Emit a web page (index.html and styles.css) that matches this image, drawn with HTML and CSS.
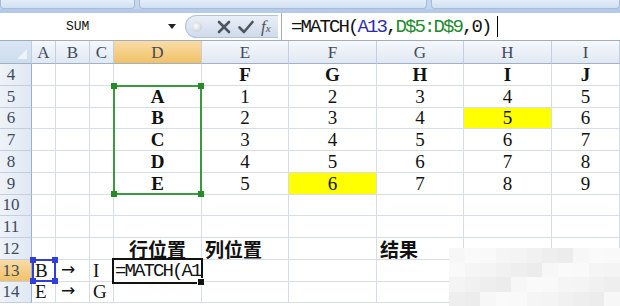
FILE: index.html
```html
<!DOCTYPE html>
<html lang="zh">
<head>
  <meta charset="UTF-8" />
  <title>MATCH</title>
  <link rel="stylesheet" href="styles.css">
</head>
<body>

  <div class="ribbon">
    <div class="tab t1"></div>
    <div class="tab t2"></div>
    <div class="tab t3"></div>
  </div>

  <div class="bar">
    <div class="namebox">
      <span class="name">SUM</span>
      <span class="drop"></span>
    </div>
    <div class="btns">
      <span class="dot"></span>
      <svg class="ico" width="14" height="14" viewBox="0 0 14 14"><path d="M2 2 L12 12 M12 2 L2 12" stroke="#50565e" stroke-width="2.6" stroke-linecap="round"/></svg>
      <svg class="ico" width="16" height="14" viewBox="0 0 16 14"><path d="M1.5 7.5 L6 12 L14.5 2" fill="none" stroke="#50565e" stroke-width="2.6" stroke-linecap="round" stroke-linejoin="round"/></svg>
      <span class="fx">f<small>x</small></span>
    </div>
    <div class="formula">=MATCH(<span class="ref-a">A13</span>,<span class="ref-d">D$5:D$9</span>,0)<span class="caret"></span></div>
  </div>

  <div class="sheet" id="sheet">
    <div class="rng"><i class="hd tl"></i><i class="hd tr"></i><i class="hd bl"></i><i class="hd br"></i></div>
    <div class="pick"><i class="hd tl"></i><i class="hd tr"></i><i class="hd bl"></i><i class="hd br"></i></div>
    <div class="active">=MATCH(A1<i class="fill"></i></div>
  </div>

  <div class="mosaic" id="mosaic"></div>

  <script>
    const cols = ['A', 'B', 'C', 'D', 'E', 'F', 'G', 'H', 'I'];
    const sheet = document.getElementById('sheet');

    const data = {
      E4: 'F', F4: 'G', G4: 'H', H4: 'I', I4: 'J',
      D5: 'A', D6: 'B', D7: 'C', D8: 'D', D9: 'E',
      D12: '行位置', E12: '列位置', G12: '结果',
      A13: 'B', B13: '→', C13: 'I',
      A14: 'E', B14: '→', C14: 'G'
    };
    // numbers: E5 = 1 ... I9 = 9
    for (let r = 5; r <= 9; r++) {
      for (let i = 4; i < 9; i++) {
        data[cols[i] + r] = String(r - 4 + i - 4);
      }
    }
    const yellow = ['F9', 'H6'];
    const left = ['E12', 'G12', 'A13', 'B13', 'C13', 'A14', 'B14', 'C14'];

    function cell(row, col, cls, text) {
      const d = document.createElement('div');
      d.className = 'c ' + cls;
      d.style.gridArea = row + ' / ' + col;
      d.textContent = text;
      sheet.appendChild(d);
      return d;
    }

    cell(1, 1, 'h corner', '');
    cols.forEach((L, i) => cell(1, i + 2, 'h' + (L === 'D' ? ' on' : ''), L));

    for (let r = 4; r <= 14; r++) {
      const gr = r - 2;
      cell(gr, 1, 'rh' + (r === 13 ? ' on' : ''), r);
      cols.forEach((L, i) => {
        const key = L + r;
        let cls = '';
        if (r === 4 || (L === 'D' && r <= 9)) cls += ' b';
        if (r === 12) cls += ' cjk';
        if (left.includes(key)) cls += ' l';
        if (L === 'B' && (r === 13 || r === 14)) cls += ' arrow';
        if (yellow.includes(key)) cls += ' yl';
        cell(gr, i + 2, cls, data[key] || '');
      });
    }

    // blurred watermark tiles
    const shades = ['#f7f7f7', '#f1f1f1', '#f9f9f9', '#ececec', '#f4f4f4', '#fafafa', '#eeeeee', '#f5f5f5'];
    const mosaic = document.getElementById('mosaic');
    for (let k = 0; k < 44; k++) {
      const t = document.createElement('span');
      t.style.background = shades[(k * 5 + Math.floor(k / 11) * 3) % shades.length];
      mosaic.appendChild(t);
    }
  </script>

</body>
</html>
```

FILE: styles.css
```css
body {
  margin: 0;
  width: 620px;
  height: 306px;
  overflow: hidden;
  position: relative;
  background: #fff;
  font-family: 'Liberation Mono', 'DejaVu Sans Mono', monospace;
  color: #111;
}

.ribbon {
  height: 9px;
  display: flex;
  gap: 4px;
  background: #c4d6ee;
}

.tab {
  background: linear-gradient(#e4edf8, #d2e0f2);
  border: 1px solid #a6bcda;
  border-top: none;
  border-radius: 0 0 4px 4px;
}

.t1 { width: 133px; }
.t2 { width: 286px; }
.t3 { flex: 1; }

.bar {
  height: 27px;
  border-top: 4px solid #b5cae6;
  border-bottom: 1px solid #a3adba;
  display: flex;
  background: #fff;
}

.namebox {
  width: 185px;
  display: flex;
  align-items: center;
}

.name {
  font-size: 13px;
  padding-left: 66px;
}

.drop {
  margin-left: auto;
  margin-right: 9px;
  border-left: 4px solid transparent;
  border-right: 4px solid transparent;
  border-top: 5px solid #222;
}

.btns {
  width: 93px;
  margin: 2px 0;
  display: flex;
  align-items: center;
  gap: 7px;
  background: linear-gradient(#e9eff7, #cfdbeb);
  border: 1px solid #b4c3d8;
  border-right: none;
  border-radius: 12px 0 0 12px;
  box-sizing: border-box;
}

.dot {
  width: 10px;
  height: 10px;
  margin-left: 6px;
  margin-right: 8px;
  border-radius: 50%;
  background: radial-gradient(circle at 40% 40%, #fdfdfd, #b9c1cb);
}

.fx {
  font-family: 'Liberation Serif', serif;
  font-style: italic;
  font-size: 17px;
  color: #50565e;
}

.fx small {
  font-size: 11px;
}

.formula {
  flex: 1;
  margin-left: 3px;
  padding-left: 9px;
  border-left: 1px solid #a3adba;
  display: flex;
  align-items: center;
  font-size: 19px;
  letter-spacing: -1.9px;
  white-space: pre;
}

.ref-a { color: #2a2cb0; }
.ref-d { color: #1f8a2e; }

.caret {
  width: 1px;
  height: 21px;
  margin-left: 6px;
  background: #000;
}

.sheet {
  display: grid;
  grid-template-columns: 32px 24px 34px 24px 88px 87px 88px 87px 88px 1fr;
  grid-template-rows: 23px repeat(11, 21.75px);
}

.c {
  box-sizing: border-box;
  border-right: 1px solid #d7dde6;
  border-bottom: 1px solid #d7dde6;
  display: flex;
  align-items: flex-end;
  justify-content: center;
  font-family: 'Liberation Serif', serif;
  font-size: 19px;
  line-height: 19px;
  padding-bottom: 1px;
  white-space: nowrap;
  overflow: hidden;
}

.c.l {
  justify-content: flex-start;
  padding-left: 3px;
}

.c.b { font-weight: bold; }

.c.cjk {
  font-family: 'Noto Sans CJK SC', sans-serif;
  font-weight: bold;
  font-size: 19px;
  line-height: 21px;
  padding-bottom: 0;
  overflow: visible;
}

.c.arrow {
  font-family: 'DejaVu Sans', sans-serif;
  font-size: 17px;
  padding-left: 5px;
  padding-bottom: 2px;
}

.yl { background: #ffff00; }

.h {
  background: linear-gradient(#f5f8fc, #e1e8f2);
  border-right: 1px solid #c3cfdf;
  border-bottom: 1px solid #9eb1c9;
  align-items: center;
  padding: 0;
  font-size: 17px;
  color: #3f4b5c;
}

.rh {
  background: linear-gradient(90deg, #eef3f9, #e0e8f3);
  border-right: 1px solid #9eb1c9;
  border-bottom: 1px solid #c3cfdf;
  padding-right: 9px;
  font-size: 17px;
  color: #3f4b5c;
}

.on {
  background: linear-gradient(#f9dca8, #f1c166);
}

.corner {
  position: relative;
  background: linear-gradient(#dbe6f4, #cddced);
}

.corner::after {
  content: '';
  position: absolute;
  right: 4px;
  bottom: 4px;
  border-left: 10px solid transparent;
  border-bottom: 10px solid #eef3f9;
}

.rng, .pick, .active {
  position: relative;
  z-index: 1;
}

.rng {
  grid-area: 3 / 5 / 8 / 6;
  margin: -1px 0 0 -1px;
  border: 2px solid #3b9a3b;
}

.pick {
  grid-area: 11 / 2;
  margin: -1px 0 0 0;
  border: 2px solid #2f3fd8;
}

.hd {
  position: absolute;
  width: 6px;
  height: 6px;
  background: #268a26;
}

.pick .hd { background: #2f3fd8; }

.tl { left: -4px; top: -4px; }
.tr { right: -4px; top: -4px; }
.bl { left: -4px; bottom: -4px; }
.br { right: -4px; bottom: -4px; }

.active {
  grid-area: 11 / 5;
  margin: -2px -1px -2px -2px;
  border: 2px solid #111;
  background: #fff;
  display: flex;
  align-items: center;
  font-size: 19px;
  letter-spacing: -1.9px;
  white-space: nowrap;
  overflow: visible;
  padding-left: 1px;
}

.fill {
  position: absolute;
  right: -4px;
  bottom: -4px;
  width: 6px;
  height: 6px;
  background: #111;
  border: 1px solid #fff;
}

.mosaic {
  position: absolute;
  left: 449px;
  top: 248px;
  width: 171px;
  height: 58px;
  display: grid;
  grid-template-columns: repeat(11, 1fr);
  grid-template-rows: repeat(4, 1fr);
  z-index: 2;
}
```
